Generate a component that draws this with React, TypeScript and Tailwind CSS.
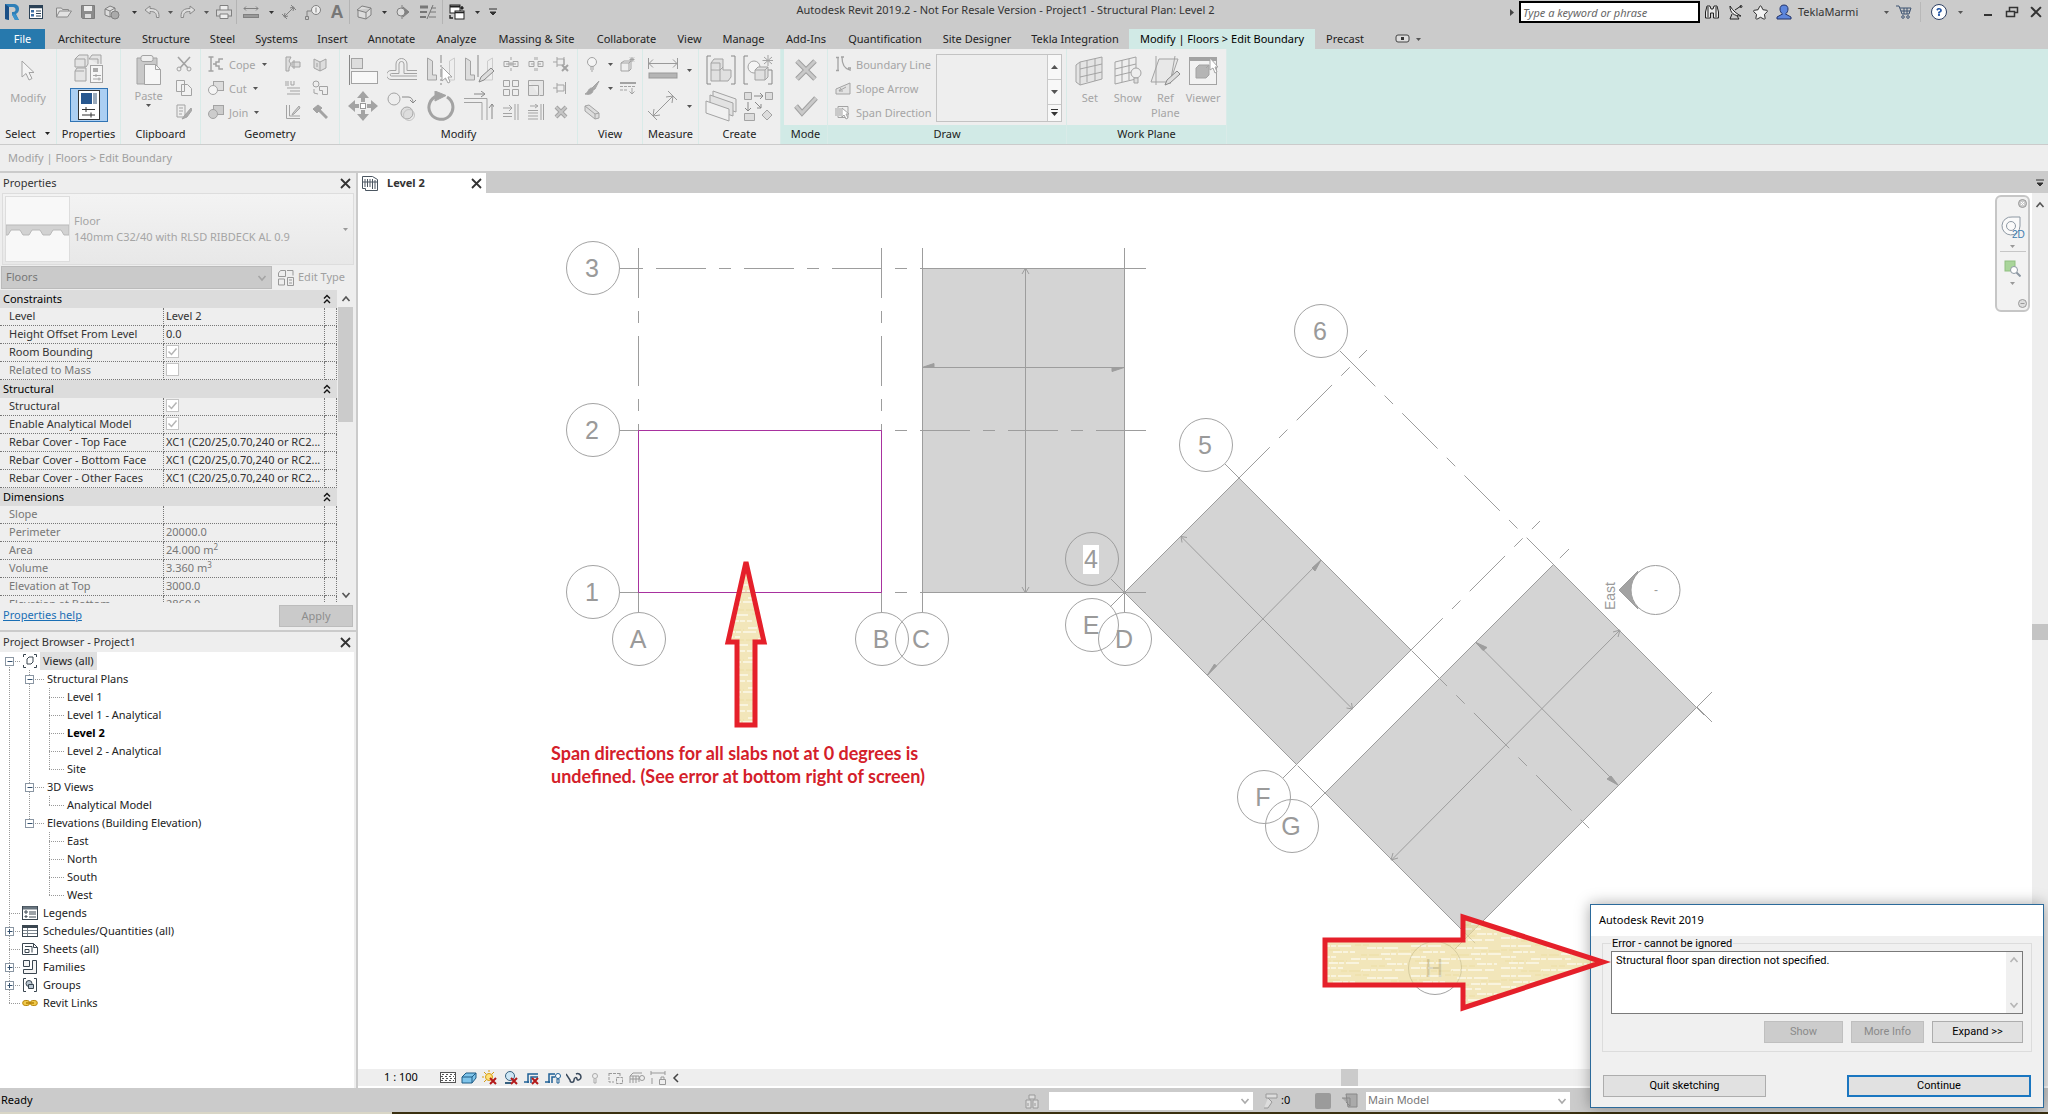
import type { ReactNode } from "react";
import { FaStar, FaQuestion } from "react-icons/fa";

type SvgProps = { w?: number; h?: number; stroke?: string; fill?: string; children: ReactNode };

function Svg({ w = 16, h = 16, stroke = "#a3a3a3", fill = "none", children }: SvgProps) {
  return (
    <svg width={w} height={h} viewBox={`0 0 ${w} ${h}`} stroke={stroke} fill={fill} className="shrink-0" aria-hidden="true">
      {children}
    </svg>
  );
}

function Caret({ color = "#555" }: { color?: string }) {
  return (
    <Svg w={7} h={5} stroke="none" fill={color}>
      <path d="M1 1h5L3.500 4z" />
    </Svg>
  );
}

function CloseX({ size = 11, color = "#333" }: { size?: number; color?: string }) {
  return (
    <svg width={size} height={size} viewBox="0 0 11 11" stroke={color} strokeWidth="1.8" aria-hidden="true">
      <path d="M1 1l9 9M10 1l-9 9" />
    </svg>
  );
}

function Chevron({ up = false, color = "#555" }: { up?: boolean; color?: string }) {
  return (
    <svg width="10" height="8" viewBox="0 0 10 8" fill="none" stroke={color} strokeWidth="1.6" aria-hidden="true">
      {up ? <path d="M1.500 6L5 2l3.500 4" /> : <path d="M1.500 2L5 6l3.500-4" />}
    </svg>
  );
}

/* ---------- quick access toolbar ---------- */

const qatSep = <span className="h-6 w-px bg-[#b4b4b4]" />;

function Qat({ w, label, children }: { w: string; label: string; children: ReactNode }) {
  return (
    <button aria-label={label} className={`flex h-6 shrink-0 items-center justify-center ${w}`}>
      {children}
    </button>
  );
}

function TitleBar() {
  return (
    <div className="flex h-[29px] items-start bg-[#cbcbcb] text-[11px] text-[#333]">
      <div className="flex h-6 items-center">
        <Qat w="w-6" label="Revit">
          <Svg w={18} h={18} stroke="none">
            <path d="M2 1h8c4 0 6 2 6 5 0 2-1 4-3 5l3 6h-4L9 11.500V9h1c2 0 2.500-1 2.500-2.500S11.500 4 10 4H6v13L2 16z" fill="#2f7fb8" />
            <path d="M2 1l4 3v13l-4-1z" fill="#1b4f86" />
            <path d="M9 11.500l3 5.500h4l-4-6z" fill="#3b93cc" />
          </Svg>
        </Qat>
        <Qat w="w-6" label="Home">
          <Svg stroke="#2c4257">
            <rect x="1.500" y="1.500" width="13" height="13" fill="#fff" />
            <path d="M1 3h14" strokeWidth="2.500" />
            <rect x="3" y="6" width="3" height="2.500" fill="#3d6da2" stroke="none" />
            <rect x="3" y="10" width="3" height="2.500" fill="#3d6da2" stroke="none" />
            <path d="M8 7h5M8 9.500h5M8 12h5" />
          </Svg>
        </Qat>
        <Qat w="w-8" label="Open">
          <Svg stroke="#8a8a8a">
            <path d="M.5 13V4h5l1 1.500h6V7M.5 13l3-6h12l-4 6z" fill="#e2e2e2" />
          </Svg>
        </Qat>
        <Qat w="w-4" label="Save">
          <Svg stroke="#7c7c7c" fill="#8c8c8c">
            <path d="M1.500 1.500h13v13h-12l-1-1z" />
            <rect x="4" y="2" width="8" height="5" fill="#ececec" stroke="none" />
            <rect x="5" y="10" width="6" height="4" fill="#dcdcdc" stroke="none" />
          </Svg>
        </Qat>
        <Qat w="w-8" label="Synchronize">
          <Svg stroke="#808080">
            <path d="M1 5l5-3 5 2v6l-5 3-5-2zM1 5l5 2v6M6 7l5-3" fill="#ddd" />
            <circle cx="11" cy="11" r="4" fill="#aaa" />
          </Svg>
        </Qat>
        <Qat w="w-3" label="Synchronize options"><Caret color="#333" /></Qat>
        <Qat w="w-6" label="Undo">
          <Svg stroke="#8a8a8a">
            <path d="M1 6l5-4v2.500c6 0 9 2 9 8v1h-2.500c0-5-2-6-6.500-6V10z" fill="#ddd" />
          </Svg>
        </Qat>
        <Qat w="w-3" label="Undo options"><Caret /></Qat>
        <Qat w="w-6" label="Redo">
          <Svg stroke="#8a8a8a">
            <path d="M15 6l-5-4v2.500c-6 0-9 2-9 8v1h2.500c0-5 2-6 6.500-6V10z" fill="#ddd" />
          </Svg>
        </Qat>
        <Qat w="w-3" label="Redo options"><Caret /></Qat>
        <Qat w="w-6" label="Print">
          <Svg stroke="#808080">
            <path d="M4 6V1.500h8V6" fill="#eee" />
            <rect x=".5" y="6" width="15" height="6" fill="#d8d8d8" />
            <path d="M4 10h8v4.500H4z" fill="#eee" />
          </Svg>
        </Qat>
        {qatSep}
        <Qat w="w-7" label="Measure">
          <Svg stroke="#808080">
            <path d="M1 4.500h14M3 2.500l-2 2 2 2M13 2.500l2 2-2 2" />
            <rect x=".5" y="10.500" width="15" height="3" fill="#999" />
          </Svg>
        </Qat>
        <Qat w="w-3" label="Measure options"><Caret color="#333" /></Qat>
        <Qat w="w-6" label="Aligned dimension">
          <Svg stroke="#808080">
            <path d="M3 13L13 3M1 10l5 5M10 1l5 5M4 9l-1 4 4-1M9 4l4-1-1 4" />
          </Svg>
        </Qat>
        <Qat w="w-6" label="Tag by category">
          <Svg stroke="#808080">
            <circle cx="11" cy="6" r="4.500" fill="#eee" />
            <path d="M11 3.500v5M6 7H2v6M.5 12.500h3v3h-3z" />
          </Svg>
        </Qat>
        <Qat w="w-6" label="Text">
          <span className="font-['Liberation_Sans',sans-serif] text-[18px] font-bold text-[#777]">A</span>
        </Qat>
        {qatSep}
        <Qat w="w-7" label="Default 3D view">
          <Svg stroke="#808080">
            <path d="M1 6l5-4 9 2v7l-5 4-8-2V6.500M1 6l9 2.500L15 4M10 8.500V15" fill="#dcdcdc" />
          </Svg>
        </Qat>
        <Qat w="w-3" label="3D view options"><Caret color="#333" /></Qat>
        <Qat w="w-6" label="Section">
          <Svg stroke="#808080">
            <path d="M8 1v14" />
            <path d="M9 3l6 5-6 5z" fill="#808080" />
            <circle cx="7" cy="8" r="4" fill="#ddd" />
          </Svg>
        </Qat>
        <Qat w="w-7" label="Thin lines">
          <Svg stroke="#777">
            <path d="M0 3h8" strokeWidth="3" />
            <path d="M0 8h7M0 13h6" strokeWidth="2" />
            <path d="M7 15L13 1M11 4h5M10 8h6M9 13h7" />
          </Svg>
        </Qat>
        {qatSep}
        <Qat w="w-7" label="Switch windows">
          <Svg stroke="#222">
            <rect x="1" y="1" width="10" height="8" fill="#fff" />
            <path d="M1 2.500h10" strokeWidth="2" />
            <rect x="6" y="7" width="9" height="8" fill="#fff" />
            <path d="M6 8.500h9M13 2v3M11.500 3.500L13 5l1.500-1.500M1 11v3h3" strokeWidth="1.400" />
          </Svg>
        </Qat>
        <Qat w="w-3" label="Window list"><Caret color="#333" /></Qat>
        <Qat w="w-5" label="Customize toolbar">
          <Svg w={10} h={10} stroke="#333" fill="#333">
            <path d="M1 2h8" />
            <path d="M2 5h6L5 8z" />
          </Svg>
        </Qat>
      </div>
      <h1 className="flex-1 pt-[2px] text-center whitespace-nowrap">
        Autodesk Revit 2019.2 - Not For Resale Version - Project1 - Structural Plan: Level 2
      </h1>
      <div className="flex h-6 items-center">
        <Svg w={7} h={9} stroke="none" fill="#444"><path d="M2 1l4 3.500L2 8z" /></Svg>
        <input
          aria-label="Search"
          placeholder="Type a keyword or phrase"
          className="ml-1 h-[22px] w-[181px] border-2 border-black bg-white px-[2px] italic placeholder:text-[#666]"
        />
        <Qat w="w-6" label="Search help">
          <Svg stroke="#222">
            <path d="M1.500 8L3 2h3l1 3h2l1-3h3l1.500 6v6h-5V9h-3v5h-5zM4 3v10M12 3v10" fill="#e8e8e8" />
          </Svg>
        </Qat>
        <Qat w="w-6" label="Communication center">
          <Svg stroke="#222">
            <path d="M2 2c0 7 4 10 11 10C9 10 5 7 2 2z" fill="#eee" />
            <path d="M7 6l6-4M4 10l-2 5h9l-2-3" />
            <circle cx="13" cy="2.500" r="1" />
          </Svg>
        </Qat>
        <Qat w="w-6" label="Favorites"><FaStar size={15} fill="#f2f2f2" stroke="#222" strokeWidth={36} /></Qat>
        <Qat w="w-6" label="Account">
          <Svg stroke="#22336a">
            <path d="M8 1c3 0 4 2 4 4s-1 4-2.500 5L15 13v2H1v-2l5.500-3C5 9 4 7 4 5s1-4 4-4z" fill="#5d86dd" />
          </Svg>
        </Qat>
        <button className="flex w-24 items-center justify-between px-[2px]">
          TeklaMarmi <Caret />
        </button>
        <Qat w="w-6" label="App store">
          <Svg stroke="#3d5270">
            <path d="M0 2h3l3 8h7l2-6H4M5 7h9M8 4v6M11 4v6" />
            <circle cx="7" cy="13" r="1.300" />
            <circle cx="12" cy="13" r="1.300" />
          </Svg>
        </Qat>
        <span className="w-1" />
        <span className="h-5 w-px bg-[#b8b8b8]" />
        <Qat w="w-9" label="Help">
          <span className="flex size-[16px] items-center justify-center rounded-full border border-[#2c3f63] bg-white">
            <FaQuestion size={8} color="#2457a6" />
          </span>
        </Qat>
        <Caret />
        <span className="w-3" />
        <Qat w="w-6" label="Minimize"><Svg w={10} h={10} stroke="#333"><path d="M1 8h8" strokeWidth="2" /></Svg></Qat>
        <Qat w="w-6" label="Restore">
          <Svg w={14} h={12} stroke="#333">
            <path d="M4.500 5V1.500h8v5H10" strokeWidth="1.500" />
            <path d="M1.500 5.500h8v5h-8z" strokeWidth="1.500" />
          </Svg>
        </Qat>
        <Qat w="w-6" label="Close"><CloseX size={12} /></Qat>
      </div>
    </div>
  );
}

/* ---------- ribbon ---------- */

const tabs = [
  { name: "File", cls: "w-[45px] bg-[#2779ad] text-white" },
  { name: "Architecture", cls: "ml-[2px] w-[85px]" },
  { name: "Structure", cls: "w-[68px]" },
  { name: "Steel", cls: "w-[45px]" },
  { name: "Systems", cls: "w-[63px]" },
  { name: "Insert", cls: "w-[49px]" },
  { name: "Annotate", cls: "w-[69px]" },
  { name: "Analyze", cls: "w-[61px]" },
  { name: "Massing & Site", cls: "w-[99px]" },
  { name: "Collaborate", cls: "w-[81px]" },
  { name: "View", cls: "w-[45px]" },
  { name: "Manage", cls: "w-[63px]" },
  { name: "Add-Ins", cls: "w-[62px]" },
  { name: "Quantification", cls: "w-[96px]" },
  { name: "Site Designer", cls: "w-[88px]" },
  { name: "Tekla Integration", cls: "w-[108px]" },
  { name: "Modify | Floors > Edit Boundary", cls: "w-[186px] bg-[#d1eae6] text-black" },
  { name: "Precast", cls: "w-[60px]" },
];

function TabStrip() {
  return (
    <nav className="flex h-5 items-stretch bg-[#cbcbcb] text-[11px] text-[#222]">
      {tabs.map((t) => (
        <button key={t.name} className={`shrink-0 whitespace-nowrap ${t.cls}`}>
          {t.name}
        </button>
      ))}
      <button aria-label="Ribbon display" className="ml-5 flex items-center gap-1">
        <Svg w={16} h={10} stroke="#444">
          <rect x="1" y="1" width="13" height="7" rx="2" fill="#ddd" />
          <rect x="6" y="3" width="3" height="3" fill="#333" stroke="none" />
        </Svg>
        <Caret />
      </button>
    </nav>
  );
}

type PanelProps = { title: string; w: string; context?: boolean; caret?: boolean; children: ReactNode };

function Panel({ title, w, context, caret, children }: PanelProps) {
  return (
    <section className={`flex shrink-0 flex-col border-r border-[#d9ebe8] bg-[#eee] ${w}`}>
      <div className="flex h-[76px] px-1 pt-[3px] pb-[1px]">{children}</div>
      <h2 className={`flex h-[19px] items-center justify-center gap-2 pb-[3px] text-[#222] ${context ? "bg-[#d1eae6]" : ""}`}>
        {title}
        {caret && <Caret color="#222" />}
      </h2>
    </section>
  );
}

function Tool({ label, children }: { label: string; children: ReactNode }) {
  return (
    <button aria-label={label} className="flex h-6 items-center justify-center">
      {children}
    </button>
  );
}

function BigTool({ label, children }: { label: string; children: ReactNode }) {
  return (
    <button aria-label={label} className="flex h-9 items-center justify-center">
      {children}
    </button>
  );
}

function TextTool({ text, caret, children }: { text: string; caret?: boolean; children: ReactNode }) {
  return (
    <button className="flex h-6 items-center gap-[5px] whitespace-nowrap">
      {children}
      {text}
      {caret && <Caret />}
    </button>
  );
}

function SmallModifyIcons() {
  return (
    <div className="grid w-[75px] grid-cols-3">
      <Tool label="Split element">
        <Svg><path d="M1 5.500h5v5H1zM10 5.500h5v5h-5zM8 1v3M8 6v4M8 12v3M3 8h10" /></Svg>
      </Tool>
      <Tool label="Split with gap">
        <Svg><path d="M1 5.500h5v5H1zM10 5.500h5v5h-5zM7 1v3M9 1v3M7 12v3M9 12v3M3 8h3M10 8h3" /></Svg>
      </Tool>
      <Tool label="Unpin">
        <Svg><path d="M0 6h4M4 1v10M4 3h7v6H4M11 1v8" /><path d="M9 9l6 6M15 9l-6 6" strokeWidth="2" /></Svg>
      </Tool>
      <Tool label="Array">
        <Svg><path d="M.5 .5h6v6h-6zM9.500 .5h6v6h-6zM.5 9.500h6v6h-6zM9.500 9.500h6v6h-6z" /></Svg>
      </Tool>
      <Tool label="Scale">
        <Svg><path d="M.5 .5h15v15h-4M.5 .5v15h10v-10H.5" fill="#e6e6e6" /></Svg>
      </Tool>
      <Tool label="Pin">
        <Svg><path d="M0 8h4M4 3v10M4 5h7v6H4M12.500 2v12" /></Svg>
      </Tool>
      <Tool label="Trim single">
        <Svg><path d="M0 4h8M6 1l3 3-3 3M0 9.500h9M0 12.500h9M12 0v16M15 0v16" /></Svg>
      </Tool>
      <Tool label="Trim multiple">
        <Svg><path d="M2 2h7M7 0l3 2-3 2M0 6.500h10M0 9h10M0 12h10M0 15h10M13 0v16M15.500 0v16" /></Svg>
      </Tool>
      <Tool label="Delete">
        <Svg><path d="M3 3l10 10M13 3L3 13" strokeWidth="4" /><path d="M3 3l10 10M13 3L3 13" stroke="#c6c6c6" strokeWidth="2" /></Svg>
      </Tool>
    </div>
  );
}

function LargeModifyIcons() {
  return (
    <div className="grid w-[156px] grid-cols-4">
      <BigTool label="Align">
        <Svg w={30} h={30}>
          <path d="M1.500 0v30" stroke="#888" />
          <rect x="3.500" y="3.500" width="11" height="10" fill="#ddd" />
          <rect x="3.500" y="16.500" width="26" height="12" fill="#f8f8f8" />
        </Svg>
      </BigTool>
      <BigTool label="Offset">
        <Svg w={30} h={30}>
          <path d="M30 15.500H20V9a5.500 5.500 0 0 0-11 0v6.500H4a4 4 0 0 0 0 9h26M30 21H4.500a1 1 0 0 1 0-2.500H12V9a2.500 2.500 0 0 1 5 0v9.500h13" />
        </Svg>
      </BigTool>
      <BigTool label="Mirror - pick axis">
        <Svg w={30} h={30}>
          <path d="M1.500 3l5 3v14h4v5h-9z" fill="#ddd" />
          <path d="M28.500 3l-5 3v14h-4v5h9z" stroke="#ccc" />
          <path d="M15 0v30" stroke="#888" strokeDasharray="8 2 2 2" />
          <path d="M16 12v14l3.500-3 2.500 5 2-1-2-5h4z" fill="#fff" />
        </Svg>
      </BigTool>
      <BigTool label="Mirror - draw axis">
        <Svg w={30} h={30}>
          <path d="M1.500 3l5 3v14h4v5h-9z" fill="#ddd" />
          <path d="M28.500 3l-5 3v14h-4v5h9z" stroke="#ccc" />
          <path d="M14 0v22" stroke="#888" />
          <path d="M15 27l2-5 10-9 3 3-10 9z" fill="#ddd" stroke="#888" />
        </Svg>
      </BigTool>
      <BigTool label="Move">
        <Svg w={30} h={30} stroke="none" fill="#a3a3a3">
          <path d="M15 0l6 7h-4v4h-4V7H9zM15 30l6-7h-4v-4h-4v4H9zM0 15l7-6v4h4v4H7v4zM30 15l-7-6v4h-4v4h4v4z" />
          <rect x="12.500" y="12.500" width="5" height="5" fill="#fff" stroke="#999" />
        </Svg>
      </BigTool>
      <BigTool label="Copy">
        <Svg w={30} h={30}>
          <circle cx="7" cy="8" r="6" />
          <circle cx="20" cy="22" r="6" fill="#ddd" />
          <circle cx="22" cy="24" r="5.500" stroke="#c4c4c4" />
          <path d="M15 6h6c3 0 5 2 5 6M23 9l3 3 3-3" stroke="#888" />
        </Svg>
      </BigTool>
      <BigTool label="Rotate">
        <Svg w={30} h={30}>
          <path d="M11 5A12 12 0 1 0 21 6" strokeWidth="3" />
          <path d="M9 0l11 4.500L9 10z" fill="#a3a3a3" />
        </Svg>
      </BigTool>
      <BigTool label="Trim corner">
        <Svg w={30} h={30}>
          <path d="M0 7.500h23V29M0 11.500h18V29" />
          <path d="M10 3h10M17 0l4 3-4 3M28 28V13M25 17l3-4 3 4" stroke="#888" />
        </Svg>
      </BigTool>
    </div>
  );
}

function Ribbon() {
  return (
    <div className="flex h-[95px] overflow-hidden bg-[#d1eae6] text-[11px] leading-[15px] text-[#a5a5a5]">
      <Panel title="Select" w="w-[57px]" caret>
        <button className="flex w-full flex-col items-center gap-2 pt-2">
          <Svg w={16} h={22}>
            <path d="M2 1v16l4-3.500L9 20l3-1.500-3-6h5z" fill="#f4f4f4" />
          </Svg>
          Modify
        </button>
      </Panel>
      <Panel title="Properties" w="w-[64px]">
        <div className="flex w-full flex-col items-center gap-1 pt-[2px]">
          <button aria-label="Type properties">
            <Svg w={32} h={30}>
              <path d="M2 5l4-4h9v9l-2 3H2zM2 5h10v8M16 5l3-4h9v9M16 5h9v5M2 17l2-3h9v13H2zM2 17h9" fill="#e4e4e4" />
              <rect x="17.500" y="11.500" width="12" height="17" fill="#f5f5f5" />
              <rect x="20" y="14" width="5" height="4" fill="#aaa" stroke="none" />
              <path d="M20 21.500h8M20 25h8M23 20v3M26 23.500v3" />
            </Svg>
          </button>
          <button aria-label="Properties" className="flex h-[34px] w-[38px] items-center justify-center border border-[#3174b4] bg-[#abcff3]">
            <Svg w={22} h={30} stroke="#333">
              <rect x=".5" y=".5" width="21" height="29" fill="#fff" />
              <rect x="3" y="3" width="11" height="11" fill="#27578f" stroke="none" />
              <rect x="15" y="3" width="4" height="11" fill="#9aaabb" stroke="none" />
              <path d="M4 19.500h13M4 25h13M8 17v5M13 22.500v5" />
            </Svg>
          </button>
        </div>
      </Panel>
      <Panel title="Clipboard" w="w-[80px]">
        <button className="flex w-12 flex-col items-center pt-[2px]">
          <Svg w={28} h={32}>
            <path d="M2 4h20v26H2z" fill="#c9c9c9" />
            <rect x="6" y="1.500" width="12" height="6" rx="2" fill="#eee" />
            <path d="M9.500 10.500h11l5 5v15h-16z" fill="#f6f6f6" />
            <path d="M20.500 10.500v5h5" />
          </Svg>
          <span className="mt-[2px]">Paste</span>
          <Caret />
        </button>
        <div className="flex w-6 flex-col">
          <Tool label="Cut"><Svg><path d="M2 1l10 11M14 1L4 12" strokeWidth="1.600" /><circle cx="3" cy="13" r="2" /><circle cx="13" cy="13" r="2" /></Svg></Tool>
          <Tool label="Copy"><Svg><path d="M.5 .5h8v11h-8zM5.500 4.500h6l4 4v7h-10z" fill="#f2f2f2" /></Svg></Tool>
          <Tool label="Match type"><Svg><path d="M1 1h8v12H1zM3 4h4M3 7h4M3 10h3" /><path d="M15 4l-6 7-3 4 5-2 5-7z" fill="#aaa" /></Svg></Tool>
        </div>
      </Panel>
      <Panel title="Geometry" w="w-[139px]">
        <div className="flex w-[74px] flex-col pl-[3px]">
          <TextTool text="Cope" caret><Svg><path d="M.5 1h5M3 1v14M.5 15h5M15 3h-4v3H8v4h3v3h4M5 8h3" strokeWidth="1.500" /></Svg></TextTool>
          <TextTool text="Cut" caret><Svg><rect x="5.500" y="1.500" width="10" height="9" fill="#ddd" /><circle cx="5" cy="10" r="4.500" fill="#f5f5f5" /></Svg></TextTool>
          <TextTool text="Join" caret><Svg><rect x="5.500" y="1.500" width="10" height="9" fill="#ccc" /><circle cx="5" cy="10" r="4.500" fill="#ccc" /></Svg></TextTool>
        </div>
        <div className="grid w-[54px] grid-cols-2">
          <Tool label="Beam joins"><Svg><path d="M1 1h5l-2 4 2 3-2 4v3H1zM7 6h8v5H7zM9 4v9" fill="#ddd" /></Svg></Tool>
          <Tool label="Wall joins"><Svg><path d="M2 3l6 3 6-3v9l-6 3-6-3zM8 6v9M5 7v4" fill="#ddd" /></Svg></Tool>
          <Tool label="Unjoin"><Svg><path d="M1 1v5M3 1v5M6 1v4h3V1M2 8h13M5 11h10M2 14h13" /></Svg></Tool>
          <Tool label="Split face"><Svg><circle cx="4" cy="4" r="3" /><path d="M7.500 6.500h8v8h-5v-4h-3zM2 9v4l4 1" /></Svg></Tool>
          <Tool label="Paint"><Svg><path d="M1.500 1v13.500H15M4.500 1v11H15" /><path d="M14 2l-6 7-1 2 2-1 6-6z" fill="#ccc" /></Svg></Tool>
          <Tool label="Demolish"><Svg><path d="M1 5l5-4 4 3-5 5z" fill="#a3a3a3" /><path d="M7 6l8 8" strokeWidth="3" /></Svg></Tool>
        </div>
      </Panel>
      <Panel title="Modify" w="w-[238px]">
        <LargeModifyIcons />
        <SmallModifyIcons />
      </Panel>
      <Panel title="View" w="w-[65px]">
        <div className="grid w-full grid-cols-[20px_16px_20px] items-center">
          <Tool label="Hide in view"><Svg><circle cx="8" cy="6" r="4.500" fill="#f4f4f4" /><path d="M6 11h4M6 13h4M7 15h2" /></Svg></Tool>
          <span className="justify-self-center"><Caret /></span>
          <Tool label="Selection box"><Svg><path d="M1 7l3-2h7v8l-2 2H1zM1 7h8v8M9 7l2-2M12 1v5M9.500 3.500h5M10 1.500l4 4M14 1.500l-4 4" /></Svg></Tool>
          <Tool label="Override graphics"><Svg><path d="M15 1L8 8l1 2 2-1z" fill="#aaa" /><path d="M8 8c-4 0-3 4-7 6 4 1 8 0 8-4z" fill="#a3a3a3" /></Svg></Tool>
          <span className="justify-self-center"><Caret /></span>
          <Tool label="Linework"><Svg><path d="M0 3h16" strokeWidth="2" /><path d="M0 6.500h16M0 10h8" strokeDasharray="3 1" /><path d="M12 8v6M9.500 11.500L12 14l2.500-2.500" /></Svg></Tool>
          <Tool label="Displace"><Svg><path d="M1 2l4-1 10 8v5l-4 1L1 7zM1 2l10 8v5M11 10l4-1" fill="#ddd" /></Svg></Tool>
        </div>
      </Panel>
      <Panel title="Measure" w="w-[56px]">
        <div className="flex w-full flex-col">
          <BigTool label="Measure">
            <Svg w={30} h={26} stroke="#999">
              <path d="M1 6.500h28M5 2.500l-4 4 4 4M25 2.500l4 4-4 4M.5 1v11M29.500 1v11" />
              <rect x="1" y="16" width="28" height="5" fill="#b5b5b5" />
            </Svg>
            <span className="ml-2"><Caret /></span>
          </BigTool>
          <BigTool label="Aligned dimension">
            <Svg w={30} h={30} stroke="#999">
              <path d="M5 25L25 5M0 20l9 9M20 0l9 9M6 18l-1 7 7-1M18 6l7-1-1 7" />
            </Svg>
            <span className="ml-2"><Caret /></span>
          </BigTool>
        </div>
      </Panel>
      <Panel title="Create" w="w-[82px]">
        <div className="grid w-full grid-cols-2 justify-items-center">
          <BigTool label="Create assembly">
            <Svg w={30} h={30}>
              <path d="M5 1H1v28h4M25 1h4v28h-4" stroke="#888" />
              <path d="M5 8l3-4h9v11h8v7l-3 4H5zM5 15h9l3-3M14 15v11M5 8h9v7" fill="#e0e0e0" />
            </Svg>
          </BigTool>
          <BigTool label="Create group">
            <Svg w={30} h={30}>
              <path d="M5 1H1v28h4M25 15h4v14h-4" stroke="#888" />
              <circle cx="11" cy="12" r="6" fill="#f5f5f5" />
              <path d="M12 15l3-3h10v10l-3 3H12zM12 15h10v10M22 15l3-3" fill="#e0e0e0" />
              <path d="M25 0v11M19.500 5.500h11M21 2l8 7M29 2l-8 7" />
            </Svg>
          </BigTool>
          <BigTool label="Create parts">
            <Svg w={32} h={32}>
              <path d="M8 1l23 8v13L8 14z" fill="#eaeaea" />
              <path d="M5 5l23 8v13L5 18z" fill="#e2e2e2" />
              <path d="M1 11l23 8v12L1 23z" fill="#f0f0f0" />
            </Svg>
          </BigTool>
          <BigTool label="Create similar">
            <Svg w={30} h={30}>
              <path d="M1.500 1.500h7v7h-7zM22.500 1.500h7v7h-7zM1.500 22.500h10v7h-10zM19 24l5-5 5 5-5 5z" fill="#ddd" />
              <path d="M11 5h9M17 2l3 3-3 3M5 11v9M2 17l3 3 3-3M12 11l6 6M18 13v4h-4" stroke="#888" />
            </Svg>
          </BigTool>
        </div>
      </Panel>
      <div className="w-[3px]" />
      <Panel title="Mode" w="w-[44px]" context>
        <div className="flex w-full flex-col">
          <BigTool label="Cancel edit mode">
            <Svg w={24} h={24}>
              <path d="M3 3l18 18M21 3L3 21" stroke="#a0a0a0" strokeWidth="5" />
              <path d="M3 3l18 18M21 3L3 21" stroke="#c9c9c9" strokeWidth="3" />
            </Svg>
          </BigTool>
          <BigTool label="Finish edit mode">
            <Svg w={24} h={24}>
              <path d="M2 12l6 7L22 4" stroke="#a0a0a0" strokeWidth="5" />
              <path d="M2 12l6 7L22 4" stroke="#c9c9c9" strokeWidth="3" />
            </Svg>
          </BigTool>
        </div>
      </Panel>
      <Panel title="Draw" w="w-[239px]" context>
        <div className="flex flex-1 flex-col pl-[3px]">
          <TextTool text="Boundary Line"><Svg><path d="M3 1v14M1 1.500h3M1 14.500h3M7 1c0 8 3 12 8 13M6 1h3M13 12h3v3" strokeWidth="1.300" /></Svg></TextTool>
          <TextTool text="Slope Arrow"><Svg><path d="M1 9l14-6v11H1zM4 11l7-4M4 11l2-3M4 11h4" fill="#e2e2e2" /></Svg></TextTool>
          <TextTool text="Span Direction"><Svg><path d="M1 4v8M3 2.500h10v11H3zM5 4v8" /><path d="M7 4v9l2-2 2 4 2-1-2-4h3z" fill="#fff" /></Svg></TextTool>
        </div>
        <div className="mt-[2px] flex h-[68px] w-[126px] border border-[#c3c3c3]">
          <div className="flex-1" />
          <div className="flex w-[14px] flex-col divide-y divide-[#c9c9c9] border-l border-[#c9c9c9] bg-[#f8f8f8]">
            <button aria-label="Scroll up" className="flex flex-1 items-center justify-center"><Svg w={7} h={5} stroke="none" fill="#555"><path d="M0 4h7L3.500 0z" /></Svg></button>
            <button aria-label="Scroll down" className="flex flex-1 items-center justify-center"><Svg w={7} h={5} stroke="none" fill="#555"><path d="M0 0h7L3.500 4z" /></Svg></button>
            <button aria-label="More shapes" className="flex h-4 items-center justify-center"><Svg w={7} h={8} stroke="none" fill="#333"><path d="M0 0h7v1H0zM0 3h7L3.500 7z" /></Svg></button>
          </div>
        </div>
      </Panel>
      <Panel title="Work Plane" w="w-[160px]" context>
        <div className="grid w-full grid-cols-4 pt-1 text-center">
          <button className="flex flex-col items-center gap-1">
            <Svg w={30} h={30}><path d="M1 9l4-3 22-5v22l-22 6-4-3zM5 6v23M5 13l22-5M5 21l22-5M12 4v22M20 3v22" fill="#e4e4e4" /></Svg>
            Set
          </button>
          <button className="flex flex-col items-center gap-1">
            <Svg w={30} h={30}><path d="M2 6l21-5v22l-21 5zM2 13l21-5M2 20l21-5M9 4v22M16 3v21" /><circle cx="23" cy="17" r="5" fill="#eee" /><path d="M21 22h4v5h-4z" fill="#ddd" /></Svg>
            Show
          </button>
          <button className="flex flex-col items-center gap-1">
            <Svg w={30} h={30}><path d="M9 3h19L20 26H1zM6 0v29M25 0l-5 28" fill="#e8e8e8" /><path d="M15 29l2-5 10-9 3 3-10 9z" fill="#ddd" stroke="#888" /></Svg>
            <span>Ref<br />Plane</span>
          </button>
          <button className="flex flex-col items-center gap-1">
            <Svg w={30} h={30}><rect x="1.500" y="1.500" width="27" height="27" fill="#f2f2f2" /><path d="M1 3.500h28" strokeWidth="3" /><path d="M8 12l3-3h10v10l-3 3H8zM18 12l3-3" fill="#b5b5b5" /><path d="M22 2v12l3-2 2 5 2-1-2-5h3z" fill="#fff" /></Svg>
            Viewer
          </button>
        </div>
      </Panel>
    </div>
  );
}

/* ---------- properties palette ---------- */

type Prop = { name: string; value?: string; sup?: string; check?: boolean; dim?: boolean };

const groups: { title: string; rows: Prop[] }[] = [
  {
    title: "Constraints",
    rows: [
      { name: "Level", value: "Level 2" },
      { name: "Height Offset From Level", value: "0.0" },
      { name: "Room Bounding", check: true },
      { name: "Related to Mass", check: false, dim: true },
    ],
  },
  {
    title: "Structural",
    rows: [
      { name: "Structural", check: true },
      { name: "Enable Analytical Model", check: true },
      { name: "Rebar Cover - Top Face", value: "XC1 (C20/25,0.70,240 or RC2..." },
      { name: "Rebar Cover - Bottom Face", value: "XC1 (C20/25,0.70,240 or RC2..." },
      { name: "Rebar Cover - Other Faces", value: "XC1 (C20/25,0.70,240 or RC2..." },
    ],
  },
  {
    title: "Dimensions",
    rows: [
      { name: "Slope", value: "", dim: true },
      { name: "Perimeter", value: "20000.0", dim: true },
      { name: "Area", value: "24.000 m", sup: "2", dim: true },
      { name: "Volume", value: "3.360 m", sup: "3", dim: true },
      { name: "Elevation at Top", value: "3000.0", dim: true },
      { name: "Elevation at Bottom", value: "2860.0", dim: true },
    ],
  },
];

function PropCheck({ id, checked }: { id: string; checked: boolean }) {
  return (
    <span className="relative block size-[13px]">
      <input id={id} type="checkbox" defaultChecked={checked} disabled className="block size-[13px] appearance-none border border-[#c4c4c4] bg-white" />
      {checked && (
        <svg className="absolute inset-0" width="13" height="13" fill="none" stroke="#b5b5b5" strokeWidth="1.500" aria-hidden="true">
          <path d="M2.500 6.500l3 3 5-6" />
        </svg>
      )}
    </span>
  );
}

function Properties() {
  const cell = "h-[18px] border-b border-dotted border-[#777] p-0 pb-[2px] leading-[15px] whitespace-nowrap overflow-hidden";
  return (
    <section className="flex shrink-0 flex-col bg-[#eee]">
      <header className="flex h-5 items-center justify-between pr-[5px] pl-[3px] text-[#333]">
        <h2>Properties</h2>
        <button aria-label="Close properties"><CloseX /></button>
      </header>
      <button className="mx-[2px] flex h-[72px] items-center border border-[#ddd] bg-linear-to-b from-[#f3f3f3] to-[#e8e8e8] pr-1 pl-[2px] text-left text-[#a5a5a5]">
        <svg width="65" height="66" className="shrink-0 border border-[#ddd] bg-[#f8f8f8]" aria-hidden="true">
          <path d="M0 28h63v10h-5l-3-5h-8l-3 5h-7l-3-5h-8l-3 5h-6l-3-5H5l-3 5H0z" fill="#d2d2d2" stroke="#b9b9b9" />
        </svg>
        <span className="ml-1 flex-1 leading-4">
          Floor
          <br />
          140mm C32/40 with RLSD RIBDECK AL 0.9
        </span>
        <Caret color="#999" />
      </button>
      <div className="flex h-[25px] items-center pl-px">
        <div className="relative w-[271px]">
          <select aria-label="Element filter" disabled className="h-[23px] w-full appearance-none border border-[#bbb] bg-[#cacaca] px-1 text-[#777] opacity-100">
            <option>Floors</option>
          </select>
          <span className="pointer-events-none absolute top-2 right-[5px]"><Chevron color="#a5a5a5" /></span>
        </div>
        <button className="ml-[6px] flex items-center gap-1 text-[#a0a0a0]">
          <Svg>
            <path d="M.5 3l2-2.500h5v6h-7zM9 .5h6v5M.5 9h6v6h-6zM9.500 7.500h6v8h-6zM11 10h3M11 13h3" stroke="#999" />
          </Svg>
          Edit Type
        </button>
      </div>
      <div className="flex h-[313px] overflow-hidden">
        <div className="h-full w-[337px] overflow-hidden">
          <table className="w-full table-fixed border-separate border-spacing-0 text-[#333]">
            <colgroup>
              <col className="w-[164px]" />
              <col />
              <col className="w-[12px]" />
            </colgroup>
            {groups.map((g) => (
              <tbody key={g.title}>
                <tr className="bg-[#dcdcdc] text-black">
                  <th colSpan={2} className="h-[18px] p-0 pl-[3px] text-left leading-[18px] font-normal">{g.title}</th>
                  <td className="p-0">
                    <svg width="8" height="10" className="-ml-[2px]" fill="none" stroke="#111" strokeWidth="1.400" aria-hidden="true">
                      <path d="M1 4.500l3-3 3 3M1 9l3-3 3 3" />
                    </svg>
                  </td>
                </tr>
                {g.rows.map((r) => (
                  <tr key={r.name} className={r.dim ? "text-[#777]" : ""}>
                    <td className={`${cell} border-r pl-[9px]`}>
                      {r.check === undefined ? r.name : <label htmlFor={r.name}>{r.name}</label>}
                    </td>
                    <td className={`${cell} border-r pl-[2px]`}>
                      {r.check === undefined ? r.value : <PropCheck id={r.name} checked={r.check} />}
                      {r.sup && <sup className="text-[8px]">{r.sup}</sup>}
                    </td>
                    <td className={`${cell} border-r`} />
                  </tr>
                ))}
              </tbody>
            ))}
          </table>
        </div>
        <div className="ml-px flex w-[15px] flex-col items-center bg-[#eee]">
          <span className="flex h-[17px] items-center"><Chevron up /></span>
          <span className="h-[115px] w-full bg-[#cbcbcb]" />
          <span className="mt-auto flex h-[17px] items-center"><Chevron /></span>
        </div>
      </div>
      <footer className="flex h-[27px] items-start justify-between pt-[2px] pr-[3px] pl-[3px]">
        <a href="#help" className="leading-5 text-[#1a6fb5] underline">Properties help</a>
        <button disabled className="h-[22px] w-[74px] border border-[#bcbcbc] bg-[#cacaca] text-[#8d8d8d]">Apply</button>
      </footer>
    </section>
  );
}

/* ---------- project browser ---------- */

type Node = { text: string; depth: 0 | 1 | 2; open?: boolean; shut?: boolean; last?: boolean; lastGroup?: boolean; bold?: boolean; icon?: ReactNode };

const nodes: Node[] = [
  {
    text: "Views (all)", depth: 0, open: true,
    icon: <Svg stroke="#3a4650"><path d="M4 1.500H1.500V4M12 1.500h2.500V4M4 14.500H1.500V12M12 14.500h2.500V12M5 6l2-2h4v5l-2 2H5z" /></Svg>,
  },
  { text: "Structural Plans", depth: 1, open: true },
  { text: "Level 1", depth: 2 },
  { text: "Level 1 - Analytical", depth: 2 },
  { text: "Level 2", depth: 2, bold: true },
  { text: "Level 2 - Analytical", depth: 2 },
  { text: "Site", depth: 2, last: true },
  { text: "3D Views", depth: 1, open: true },
  { text: "Analytical Model", depth: 2, last: true },
  { text: "Elevations (Building Elevation)", depth: 1, open: true, last: true },
  { text: "East", depth: 2, lastGroup: true },
  { text: "North", depth: 2, lastGroup: true },
  { text: "South", depth: 2, lastGroup: true },
  { text: "West", depth: 2, last: true, lastGroup: true },
  {
    text: "Legends", depth: 0,
    icon: <Svg stroke="#3a4650"><rect x=".5" y="1.500" width="15" height="13" fill="#fff" /><path d="M1 3h14" stroke="#68757f" strokeWidth="3" /><path d="M3 6h2v2H3zM3 11h2v1H3zM7 7h7M7 9h7M7 12h7" /></Svg>,
  },
  {
    text: "Schedules/Quantities (all)", depth: 0, shut: true,
    icon: <Svg stroke="#3a4650"><rect x=".5" y="2.500" width="15" height="11" fill="#fff" /><path d="M1 4h14" strokeWidth="2" /><path d="M1 7.500h14M1 10.500h14M5.500 5v8" stroke="#7b858d" /></Svg>,
  },
  {
    text: "Sheets (all)", depth: 0,
    icon: <Svg stroke="#3a4650"><path d="M.5 2.500h11l4 4v7H.5zM3 5.500h7v6M3 8.500h4v3H3z" /><path d="M11.500 2.500v4h4" /></Svg>,
  },
  {
    text: "Families", depth: 0, shut: true,
    icon: <Svg stroke="#3a4650"><path d="M1.500 1.500h6v6h-6zM10.500 1.500h4v13h-13v-4h9z" fill="#f5f5f5" /></Svg>,
  },
  {
    text: "Groups", depth: 0, shut: true,
    icon: <Svg stroke="#3a4650"><path d="M4 1.500H1.500v13H4M12 1.500h2.500v13H12" /><circle cx="7" cy="6.500" r="3" fill="#b9c6d2" /><path d="M6.500 7.500h5v4h-5z" fill="#b9c6d2" /></Svg>,
  },
  {
    text: "Revit Links", depth: 0, last: true,
    icon: <Svg stroke="#b8860b"><rect x=".7" y="5.500" width="7" height="5" rx="2.500" fill="#f0c94a" /><rect x="8.300" y="5.500" width="7" height="5" rx="2.500" fill="#f0c94a" /><path d="M4 8h8" strokeWidth="1.600" /></Svg>,
  },
];

function Branch({ node, first }: { node: Node; first: boolean }) {
  const { depth } = node;
  const w = depth === 0 ? 20 : depth === 1 ? 44 : 64;
  const x = 9 + depth * 20;
  return (
    <svg width={w} height="18" className="shrink-0" stroke="#999" strokeDasharray="1 1" aria-hidden="true">
      {depth > 0 && <path d="M9.500 0v18" />}
      {depth === 2 && !node.lastGroup && <path d="M29.500 0v18" />}
      <path d={`M${x + 0.5} ${first ? 9 : 0}V${node.last ? 9 : 18}M${x} 9.500H${w}`} />
      {depth < 2 && node.open && !first && <path d={`M${x + 20.5} 14v4`} />}
      {(node.open || node.shut) && (
        <g strokeDasharray="none" stroke="#8a96a3">
          <rect x={x - 3.5} y="5.500" width="8" height="8" fill="#fff" />
          <path d={`M${x - 1.5} 9.500h5${node.shut ? `M${x + 0.5} 7v5` : ""}`} stroke="#33506e" />
        </g>
      )}
    </svg>
  );
}

function ProjectBrowser() {
  return (
    <section className="flex min-h-0 flex-1 flex-col border-t-2 border-[#cbcbcb] bg-[#eee]">
      <header className="flex h-5 shrink-0 items-center justify-between pr-[5px] pl-[3px] text-[#333]">
        <h2>Project Browser - Project1</h2>
        <button aria-label="Close project browser"><CloseX /></button>
      </header>
      <ul className="mr-[2px] flex-1 overflow-hidden bg-white text-[#222]">
        {nodes.map((n, i) => (
          <li key={n.text} className="flex h-[18px] items-center">
            <Branch node={n} first={i === 0} />
            {n.icon && <span className="flex w-5 justify-center">{n.icon}</span>}
            <span className={`px-[3px] leading-[18px] ${i === 0 ? "bg-[#e0e0e0]" : ""} ${n.bold ? "font-bold text-black" : ""}`}>{n.text}</span>
          </li>
        ))}
      </ul>
    </section>
  );
}

/* ---------- drawing ---------- */

const bubbles = [
  { t: "3", x: 593, y: 268 }, { t: "2", x: 593, y: 430 }, { t: "1", x: 593, y: 592 },
  { t: "A", x: 639, y: 639 }, { t: "B", x: 882, y: 639 }, { t: "C", x: 922, y: 639 }, { t: "D", x: 1125, y: 639 },
  { t: "E", x: 1092, y: 625 }, { t: "5", x: 1206, y: 445 }, { t: "6", x: 1321, y: 331 },
  { t: "F", x: 1264, y: 797 }, { t: "G", x: 1292, y: 826 }, { t: "H", x: 1435, y: 968 },
];

const gridLines = [
  "M1146 268.500H620", "M1146 430.500H620", "M1146 592.500H620",
  "M638.500 248V612", "M881.500 248V612", "M922.500 248V612", "M1124.500 248V612",
  "M1225 464L1596 835", "M1340 351L1712 723", "M1111 579L1482 950",
  "M1110 607L1367 350", "M1283 778L1540 521", "M1311 807L1569 549", "M1455 949L1712 692",
];

function Plan() {
  return (
    <svg width="100%" height="100%" className="absolute inset-0" role="img" aria-label="Structural plan of level 2">
      {/* drawing units are measured from the top left of the window */}
      <g transform="translate(-358 -193)" fill="none" stroke="#9d9d9d">
        <path d="M922.500 268.500h202v324h-202z" fill="#d4d4d4" />
        <path d="M1124.500 592.500L1239 478l172 172-114.500 114.500z" fill="#d4d4d4" />
        <path d="M1553.500 564.500L1696.500 707.500 1468 936 1325 793z" fill="#d4d4d4" />
        {gridLines.map((d) => (
          <path key={d} d={d} strokeDasharray="50 13 12 13" />
        ))}
        <path d="M620 268.500h19M620 430.500h19M620 592.500h19M638.500 592v20M881.500 592v20M922.500 592v20M1124.500 592v20" />
        <path d="M1697 707l15 15M1697 707l15-15" />
        <path d="M1025.500 268v325M922 367.500h202M1022 274l3.500-6 3.500 6M1022 587l3.500 6 3.500-6" />
        <path d="M922 367.500l12-4v4zM1124 367.500l-12 4v-4z" fill="#9d9d9d" />
        <path d="M1181 536.500L1352.500 709M1187 537.500l-6-1 1 6M1346.500 708l6 1-1-6M1321 560L1207.500 675" />
        <path d="M1321 560l-9 8 3 3zM1207.500 675l7-11 2 2z" fill="#9d9d9d" />
        <path d="M1620 630L1391.500 860M1613 632l7-2-2 7M1398 858l-7 2 2-7M1476 642.500L1618 785" />
        <path d="M1476 642.500l11 5-4 3zM1618 785l-11-6 4-3z" fill="#9d9d9d" />
        {bubbles.map((b) => (
          <circle key={b.t} cx={b.x} cy={b.y} r="26.500" stroke="#a3a3a3" />
        ))}
        <circle cx="1092" cy="559" r="26.500" />
        <path d="M1083 545h16v29h-16z" fill="#fff" stroke="none" />
        <path d="M638.500 430.500h243v162h-243z" stroke="#a8329f" />
        <path d="M1619 590l19-19c-6 12-6 26 0 38z" fill="#a3a3a3" />
        <circle cx="1655.500" cy="590" r="24.500" fill="#fff" />
        <g fill="#9a9a9a" stroke="none" textAnchor="middle" className="font-['Liberation_Sans',sans-serif] text-[25px]">
          {bubbles.map((b) => (
            <text key={b.t} x={b.x - 1} y={b.y + 9}>{b.t}</text>
          ))}
          <text x="1091" y="568">4</text>
          <text x="1656" y="594" className="text-[12px]">-</text>
          <text transform="translate(1615 596) rotate(-90)" className="text-[14px]">East</text>
        </g>
      </g>
    </svg>
  );
}

function Callout({ d, w, h, cls }: { d: string; w: number; h: number; cls: string }) {
  return (
    <svg width={w} height={h} className={`pointer-events-none absolute ${cls}`} aria-hidden="true">
      <defs>
        <pattern id="chalk" width="90" height="30" patternUnits="userSpaceOnUse">
          <rect width="90" height="30" fill="#ecdc9c" />
          <path
            d="M0 3h30M46 5h34M12 9h22M60 11h30M0 14h16M30 16h40M8 20h30M66 21h20M0 25h22M40 27h44"
            stroke="#faf6e2" strokeWidth="1.600" strokeDasharray="9 1 5 2 14 3"
          />
          <path d="M34 2h14M0 7h20M70 8h20M40 12h18M4 18h22M50 23h14M20 28h22" stroke="#e4cf7e" strokeDasharray="6 2 11 2" />
        </pattern>
      </defs>
      <path d={d} fill="url(#chalk)" fillOpacity="0.7" stroke="#e5202a" strokeWidth="5" />
    </svg>
  );
}

const viewIcons: { label: string; icon: ReactNode }[] = [
  { label: "Detail level", icon: <Svg stroke="#555"><rect x=".5" y="2.500" width="15" height="10" fill="#fff" /><path d="M2 4.500h13M1 6.500h13M2 8.500h13M1 10.500h13" strokeDasharray="2 2" /></Svg> },
  { label: "Visual style", icon: <Svg stroke="#1f5c86"><path d="M1 7l4-4h10v5l-4 5H1zM1 7h10v6M11 7l4-4" fill="#7fc4ea" /></Svg> },
  { label: "Sun path off", icon: <Svg stroke="#d79b12"><circle cx="7" cy="7" r="3.500" fill="#ffe27a" /><path d="M7 0v2M0 7h2M2 2l2 2M12 2l-2 2M2 12l2-2" /><path d="M8 8l6 6M14 8l-6 6" stroke="#b31919" strokeWidth="2" /></Svg> },
  { label: "Shadows off", icon: <Svg stroke="#36607f"><circle cx="7" cy="6" r="4.500" fill="#cde6f4" /><path d="M2 13h6" strokeWidth="2" /><path d="M8 8l6 6M14 8l-6 6" stroke="#b31919" strokeWidth="2" /></Svg> },
  { label: "Crop view off", icon: <Svg stroke="#1f6096"><path d="M0 12h5M4 13V4h10M7 13V7h7" strokeWidth="1.500" /><path d="M8 8l6 6M14 8l-6 6" stroke="#b31919" strokeWidth="2" /></Svg> },
  { label: "Crop region", icon: <Svg stroke="#1f6096"><path d="M0 12h5M4 13V4h6M7 13V7h3" strokeWidth="1.500" /><circle cx="13" cy="6" r="2.500" fill="#fff" /><path d="M12 9h2v4h-2z" /></Svg> },
  { label: "Temporary hide", icon: <Svg stroke="#37475a"><path d="M0 4l4 6c0 3 4 3 4 0s3-3 3-1 4 1 4-2-3-4-5-3" strokeWidth="1.500" /></Svg> },
  { label: "Reveal hidden", icon: <Svg stroke="#aaa"><circle cx="8" cy="6" r="2.500" /><path d="M7 9v4h2V9" /></Svg> },
  { label: "Worksharing display", icon: <Svg stroke="#999"><path d="M1 3.500h11M1 3v9h5M12 3v3M8.500 7.500h6v6h-6z" strokeDasharray="3 1" /></Svg> },
  { label: "Analytical model", icon: <Svg stroke="#999"><path d="M1 6l3-3h9M1 6h9v6M1 6v7M4 6v7M7 6v7M1 9h9" /><circle cx="13" cy="8" r="2.500" /></Svg> },
  { label: "Constraints", icon: <Svg stroke="#999"><path d="M1 1v4M15 1v4M1 3h14M2 8v6M9.500 9.500h6v5h-6zM11 9V7h3v2" /></Svg> },
];

function Canvas() {
  return (
    <main className="flex min-w-0 flex-1 flex-col bg-white">
      <div className="flex h-5 shrink-0 items-stretch bg-[#cbcbcb]">
        <div className="flex w-[128px] items-center bg-white px-1 text-[#333]">
          <Svg w={17} stroke="#4a5560">
            <path d="M.5 1.500h10l5 3v11h-12v-2h-3zM3 4v8M5.500 4v8M8 4v8M10.500 4v10M13 5v9M1 7h14" />
          </Svg>
          <span className="ml-2 flex-1 font-bold">Level 2</span>
          <button aria-label="Close view"><CloseX /></button>
        </div>
        <button aria-label="View list" className="ml-auto flex w-4 items-center justify-center">
          <Svg w={10} h={10} stroke="#333" fill="#333">
            <path d="M1 2h8" />
            <path d="M2 5h6L5 8z" />
          </Svg>
        </button>
      </div>
      <div className="flex min-h-0 flex-1">
        <div className="flex min-w-0 flex-1 flex-col">
          <div className="relative flex-1 overflow-hidden">
            <Plan />
            <Callout d="M28 10L46 90H37V173H19V90H10z" w={56} h={180} cls="top-[359px] left-[360px]" />
            <p className="absolute top-[549px] left-[193px] font-['Lato',sans-serif] text-[18px] leading-[23px] font-bold whitespace-nowrap text-[#d4202a]">
              Span directions for all slabs not at 0 degrees is
              <br />
              undefined. (See error at bottom right of screen)
            </p>
            <div className="absolute top-[2px] right-[2px] flex h-[117px] w-[35px] flex-col items-center rounded-[6px] border-2 border-[#c6c6c6] bg-[#f2f2f2] py-[2px]">
              <button aria-label="Close navigation" className="self-end pr-px">
                <Svg w={9} h={9} fill="#ccc" stroke="#999"><circle cx="4.500" cy="4.500" r="4" /><path d="M3 3l3 3M6 3L3 6" stroke="#fff" /></Svg>
              </button>
              <button aria-label="2D wheel" className="mt-2">
                <Svg w={24} h={24} stroke="#8d98a3">
                  <path d="M11 1h8v9a9 9 0 1 1-8-9z" fill="#fafafa" />
                  <circle cx="10" cy="10" r="4.500" />
                  <text x="11" y="22" fill="#3e7cae" stroke="none" className="font-['Liberation_Sans',sans-serif] text-[10px]">2D</text>
                </Svg>
              </button>
              <span className="mt-1"><Caret color="#999" /></span>
              <span className="mt-[2px] h-px w-[26px] shrink-0 bg-[#c6c6c6]" />
              <button aria-label="Zoom region" className="mt-2">
                <Svg w={17} h={17} stroke="#8d98a3">
                  <rect x="1" y="1" width="10" height="10" fill="#a9d59a" stroke="#8fbf80" />
                  <circle cx="10" cy="10" r="3.500" fill="#fff" />
                  <path d="M12.500 12.500l4 4" strokeWidth="2" />
                </Svg>
              </button>
              <span className="mt-1"><Caret color="#999" /></span>
              <button aria-label="Navigation options" className="mt-auto self-end pr-px">
                <Svg w={9} h={9} fill="#ddd" stroke="#999"><circle cx="4.500" cy="4.500" r="4" /><path d="M2.500 4.500h4" /></Svg>
              </button>
            </div>
          </div>
          <div className="flex h-[17px] shrink-0 items-center bg-[#eee]">
            <span className="w-[79px] pl-[26px] whitespace-nowrap text-black">1 : 100</span>
            <div className="flex w-[231px] justify-around">
              {viewIcons.map((v) => (
                <button key={v.label} aria-label={v.label}>{v.icon}</button>
              ))}
            </div>
            <button aria-label="Collapse" className="pl-1">
              <Svg w={8} h={10} stroke="#444"><path d="M6 1L2 5l4 4" strokeWidth="1.500" /></Svg>
            </button>
            <span className="ml-auto h-full w-[17px] bg-[#cbcbcb]" />
            <span className="w-[674px]" />
          </div>
        </div>
        <div className="flex w-4 flex-col items-center bg-[#eee] pb-8">
          <span className="mt-2"><Chevron up /></span>
          <span className="my-auto h-4 w-full bg-[#c4c4c4]" />
        </div>
      </div>
      <div className="h-[2px] shrink-0 bg-white" />
    </main>
  );
}

/* ---------- status bar and dialog ---------- */

function StatusBar() {
  return (
    <footer className="flex h-[24px] shrink-0 items-center bg-[#cbcbcb] pt-px text-black">
      <span className="w-[1023px] pl-px">Ready</span>
      <Svg w={20} h={18} stroke="#999"><path d="M3 8h5v8H3zM10 8h5v8h-5zM6 3h6v4H6zM5 11v3M12 11v3" fill="#ddd" /></Svg>
      <div className="relative ml-[6px] w-[204px]">
        <select aria-label="Active workset" disabled className="block h-[18px] w-full appearance-none bg-white opacity-100"><option> </option></select>
        <span className="pointer-events-none absolute top-[5px] right-[3px]"><Chevron color="#aaa" /></span>
      </div>
      <span className="ml-2 flex w-[54px] items-center gap-[2px]">
        <Svg w={18} h={18} stroke="#999"><path d="M5 2h11v4H5zM7 6l4 4-4 6H3" fill="#ddd" /></Svg>
        :0
      </span>
      <span className="size-4 rounded-[2px] bg-[#9b9b9b]" />
      <span className="ml-[11px] flex w-[24px]">
        <Svg stroke="#888"><path d="M4 1h11v13H6zM0 5h8v8M4 9l4 4" fill="#aaa" /></Svg>
      </span>
      <div className="relative w-[204px]">
        <select aria-label="Design option" disabled className="block h-[18px] w-full appearance-none bg-white px-[2px] text-[#777] opacity-100"><option>Main Model</option></select>
        <span className="pointer-events-none absolute top-[5px] right-[3px]"><Chevron color="#aaa" /></span>
      </div>
    </footer>
  );
}

function ErrorDialog() {
  const btn = "h-[22px] border";
  return (
    <div role="dialog" aria-label="Autodesk Revit 2019" className="absolute right-1 bottom-[6px] flex h-[204px] w-[454px] flex-col border border-[#2b6a9b] bg-[#f0f0f0] font-['Roboto',sans-serif] text-black shadow-[0_0_14px_rgba(0,0,0,0.35)]">
      <h2 className="flex h-[31px] items-center bg-white pl-2 font-['Noto_Sans',sans-serif]">Autodesk Revit 2019</h2>
      <fieldset className="mx-[11px] h-[116px] border border-[#dcdcdc] px-[8px]">
        <legend className="px-px leading-[15px]">Error - cannot be ignored</legend>
        <div className="flex h-[63px] border border-[#7a7a7a] bg-white">
          <textarea
            readOnly
            aria-label="Error message"
            className="flex-1 resize-none overflow-hidden px-1 py-px leading-4"
            defaultValue="Structural floor span direction not specified."
          />
          <div className="flex w-4 flex-col items-center justify-between bg-[#f0f0f0] py-1">
            <Chevron up color="#b5b5b5" />
            <Chevron color="#b5b5b5" />
          </div>
        </div>
        <div className="mt-[7px] flex justify-end gap-2">
          <button disabled className={`${btn} w-[79px] border-[#bfbfbf] bg-[#cccccc] text-[#8a8a8a]`}>Show</button>
          <button disabled className={`${btn} w-[73px] border-[#bfbfbf] bg-[#cccccc] text-[#8a8a8a]`}>More Info</button>
          <button className={`${btn} w-[91px] border-[#adadad] bg-[#e1e1e1]`}>Expand &gt;&gt;</button>
        </div>
      </fieldset>
      <div className="mt-auto flex items-center justify-between pr-3 pb-[10px] pl-3">
        <button className={`${btn} w-[163px] border-[#adadad] bg-[#e1e1e1]`}>Quit sketching</button>
        <button className="h-[22px] w-[184px] border-2 border-[#1a76c0] bg-[#e1e1e1]">Continue</button>
      </div>
    </div>
  );
}

export default function App() {
  return (
    <div className="relative flex h-screen flex-col overflow-hidden bg-[#cbcbcb] font-['Noto_Sans',sans-serif] text-[11px]">
      <TitleBar />
      <TabStrip />
      <Ribbon />
      <div className="flex h-[29px] shrink-0 items-center border-t border-b-2 border-[#cbcbcb] bg-[#eee] pl-2 text-[#a0a0a0]">
        Modify | Floors &gt; Edit Boundary
      </div>
      <div className="flex min-h-0 flex-1">
        <aside className="mr-[2px] flex w-[356px] shrink-0 flex-col">
          <Properties />
          <ProjectBrowser />
        </aside>
        <Canvas />
      </div>
      <StatusBar />
      <div className="flex h-[2px] shrink-0 bg-[#3a3010]">
        <span className="w-[392px] bg-[#d9d6c6]" />
      </div>
      <ErrorDialog />
      <Callout d="M4 27H142V4L282 49L142 95V72H4z" w={290} h={100} cls="right-[437px] bottom-[101px]" />
    </div>
  );
}
